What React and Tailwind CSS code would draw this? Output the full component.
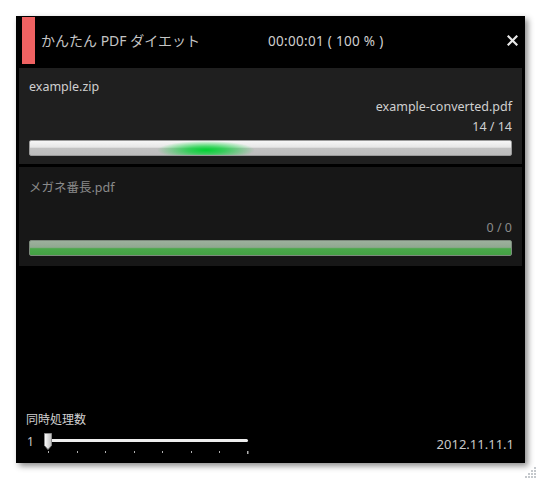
import React from "react";

const font = { fontFamily: '"Noto Sans", "Noto Sans CJK JP", sans-serif' };

function Slider() {
  const ticks = [8, 37, 65, 94, 122, 151, 179, 207];
  return (
    <svg width="212" height="22" viewBox="0 0 212 22">
      <defs>
        <linearGradient id="thumb" x1="0" x2="1" y1="0" y2="0">
          <stop offset="0" stopColor="#ffffff" />
          <stop offset="1" stopColor="#bdbdbd" />
        </linearGradient>
      </defs>
      <rect x="10" y="7" width="198" height="3" rx="1.5" fill="#eeeeee" />
      {ticks.map((x, i) => (
        <rect
          key={x}
          x={x}
          y="19"
          width={i === ticks.length - 1 ? 1.5 : 1}
          height={i === ticks.length - 1 ? 3 : 2}
          fill="#b0b0b0"
        />
      ))}
      <path
        d="M4.5 1.5 H11.5 V13.5 L8 17.5 L4.5 13.5 Z"
        fill="url(#thumb)"
        stroke="#8a8a8a"
        strokeWidth="1"
      />
    </svg>
  );
}

function Grip() {
  const dots = [
    [9, 1],
    [6, 4], [9, 4],
    [3, 7], [6, 7], [9, 7],
    [0, 10], [3, 10], [6, 10], [9, 10],
  ];
  return (
    <svg width="12" height="12" viewBox="0 0 12 12">
      {dots.map(([x, y]) => (
        <rect key={x + "-" + y} x={x} y={y} width="2" height="2" fill="#c4c8cc" />
      ))}
    </svg>
  );
}

export default function App() {
  return (
    <div className="relative w-[540px] h-[480px] bg-white overflow-hidden" style={font}>
      <div className="ml-[16px] mt-[16px] w-[509px] h-[447px] bg-black flex flex-col shadow-[3px_3px_6px_rgba(0,0,0,0.45)]">
        {/* header */}
        <div className="h-[52px] flex items-start shrink-0">
          <div className="ml-[6px] mt-[1px] w-[13px] h-[47px] bg-[#ef6262]" />
          <div className="ml-[6px] mt-[15px] text-[14px] leading-[20px] text-[#c4c4c4] w-[227px]">
            かんたん PDF ダイエット
          </div>
          <div className="mt-[15px] text-[13.5px] leading-[20px] text-[#d0d0d0] tracking-[0.3px]">
            00:00:01 ( 100 % )
          </div>
          <div className="ml-auto mr-[7px] mt-[19px]">
            <svg width="11" height="11" viewBox="0 0 11 11">
              <path d="M1.5 1.5 L9.5 9.5 M9.5 1.5 L1.5 9.5" stroke="#e8e8e8" strokeWidth="2.2" strokeLinecap="square" />
            </svg>
          </div>
        </div>

        {/* panel 1 */}
        <div className="mx-[3px] h-[96px] bg-[#1f1f1f] px-[10px] pt-[9px] flex flex-col shrink-0">
          <div className="text-[12.5px] leading-[20px] text-[#d0d0d0]">example.zip</div>
          <div className="text-[12.5px] leading-[20px] text-[#d0d0d0] text-right">example-converted.pdf</div>
          <div className="text-[12.5px] leading-[20px] text-[#d0d0d0] text-right">14 / 14</div>
          <div className="relative mt-[3px] h-[16px] border border-[#9a9a9a] rounded-[2px] overflow-hidden bg-[linear-gradient(to_bottom,#f6f6f6_0%,#e6e6e6_45%,#c2c2c2_50%,#bcbcbc_100%)]">
            <div className="absolute left-[128px] top-0 w-[96px] h-full bg-[radial-gradient(ellipse_at_center_65%,rgba(0,210,50,1)_0%,rgba(0,210,50,0.7)_28%,rgba(0,210,50,0)_72%)]" />
          </div>
        </div>

        {/* panel 2 */}
        <div className="mx-[3px] mt-[3px] h-[99px] bg-[#171717] px-[10px] pt-[11px] flex flex-col shrink-0">
          <div className="text-[12.5px] leading-[20px] text-[#8a8a8a]">メガネ番長.pdf</div>
          <div className="h-[20px]" />
          <div className="text-[12.5px] leading-[20px] text-[#8a8a8a] text-right">0 / 0</div>
          <div className="mt-[2px] h-[16px] border border-[#7c8a7c] rounded-[2px] bg-[linear-gradient(to_bottom,#9cb09c_0%,#90a890_45%,#4aa84a_55%,#44a044_100%)]" />
        </div>

        <div className="flex-1" />

        {/* footer */}
        <div className="flex items-end justify-between pl-[10px] pr-[11px] pb-[11px]">
          <div className="flex flex-col">
            <div className="text-[12px] leading-[16px] text-[#d0d0d0]">同時処理数</div>
            <div className="mt-[4px] flex items-start h-[20px]">
              <div className="ml-[1px] text-[12px] leading-[20px] text-[#c8c8c8] w-[13px]">1</div>
              <Slider />
            </div>
          </div>
          <div className="text-[13px] leading-[16px] text-[#c8c8c8]">2012.11.11.1</div>
        </div>
      </div>
      <div className="absolute right-[3px] bottom-[2px]">
        <Grip />
      </div>
    </div>
  );
}
